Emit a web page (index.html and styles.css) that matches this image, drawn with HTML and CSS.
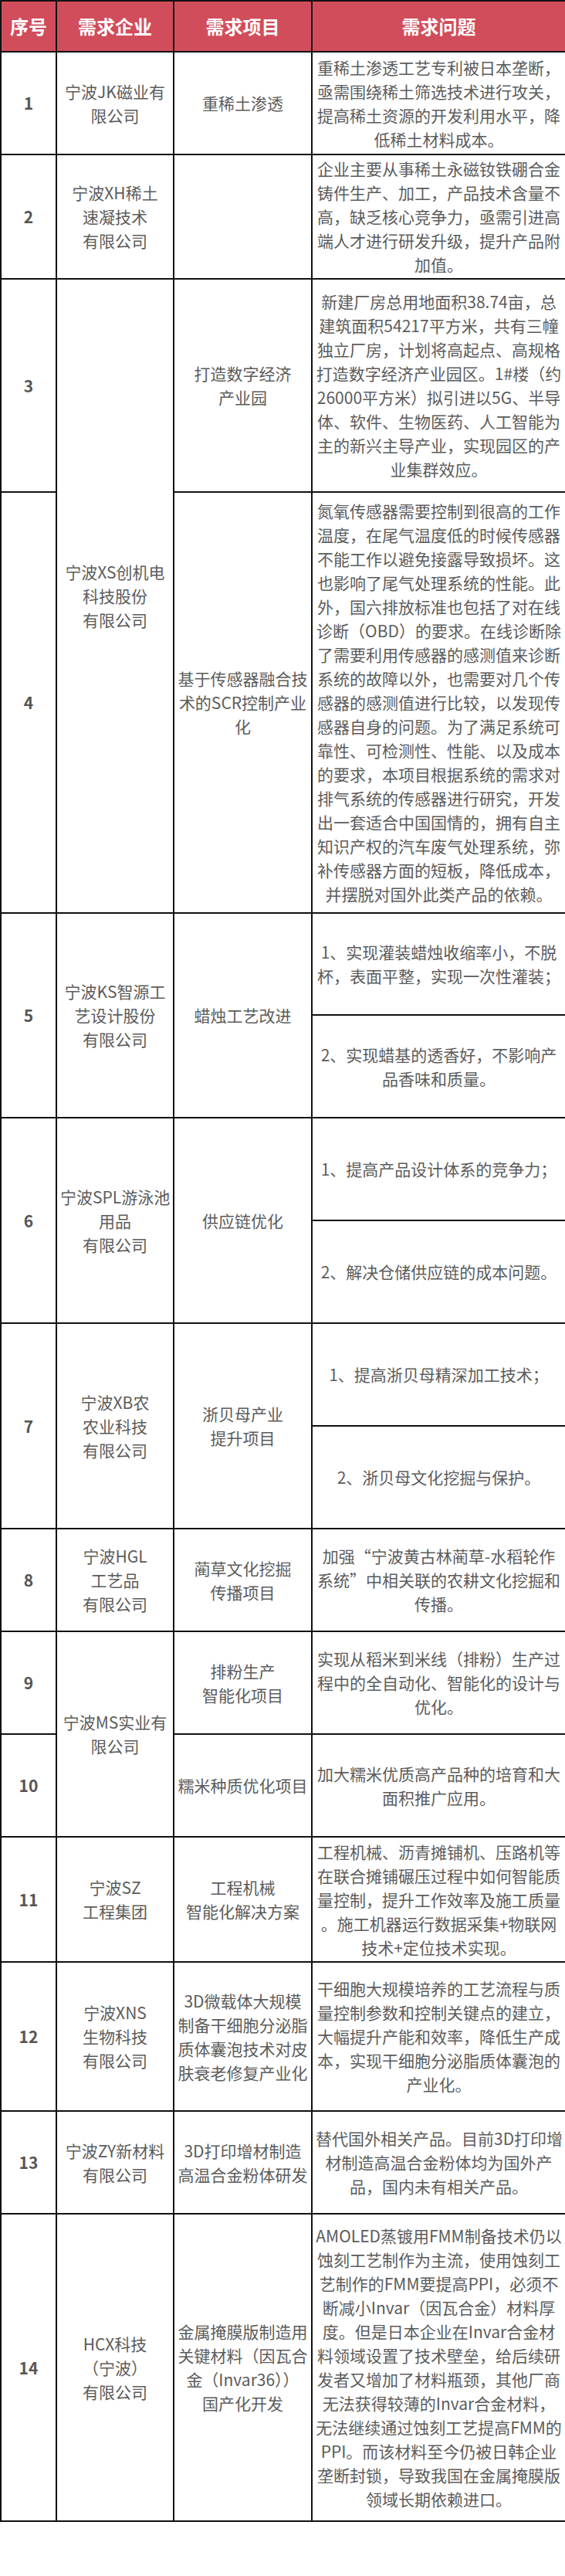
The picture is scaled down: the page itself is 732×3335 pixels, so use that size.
FILE: index.html
```html
<!DOCTYPE html>
<html lang="zh-CN">
<head>
<meta charset="utf-8">
<title>需求清单</title>
<link rel="stylesheet" href="styles.css">
</head>
<body>
<table class="demand">
  <colgroup>
    <col class="c-no">
    <col class="c-co">
    <col class="c-pj">
    <col class="c-qs">
  </colgroup>
  <thead>
    <tr class="h-66">
      <th>序号</th>
      <th>需求企业</th>
      <th>需求项目</th>
      <th>需求问题</th>
    </tr>
  </thead>
  <tbody>
    <tr class="h-133">
      <td class="no">1</td>
      <td>宁波JK磁业有<br>限公司</td>
      <td>重稀土渗透</td>
      <td>重稀土渗透工艺专利被日本垄断，<br>亟需围绕稀土筛选技术进行攻关，<br>提高稀土资源的开发利用水平，降<br>低稀土材料成本。</td>
    </tr>
    <tr class="h-161">
      <td class="no">2</td>
      <td>宁波XH稀土<br>速凝技术<br>有限公司</td>
      <td></td>
      <td>企业主要从事稀土永磁钕铁硼合金<br>铸件生产、加工，产品技术含量不<br>高，缺乏核心竞争力，亟需引进高<br>端人才进行研发升级，提升产品附<br>加值。</td>
    </tr>
    <tr class="h-276">
      <td class="no">3</td>
      <td rowspan="2">宁波XS创机电<br>科技股份<br>有限公司</td>
      <td>打造数字经济<br>产业园</td>
      <td>新建厂房总用地面积38.74亩，总<br>建筑面积54217平方米，共有三幢<br>独立厂房，计划将高起点、高规格<br>打造数字经济产业园区。1#楼（约<br>26000平方米）拟引进以5G、半导<br>体、软件、生物医药、人工智能为<br>主的新兴主导产业，实现园区的产<br>业集群效应。</td>
    </tr>
    <tr class="h-545">
      <td class="no">4</td>
      <td>基于传感器融合技<br>术的SCR控制产业<br>化</td>
      <td>氮氧传感器需要控制到很高的工作<br>温度，在尾气温度低的时候传感器<br>不能工作以避免接露导致损坏。这<br>也影响了尾气处理系统的性能。此<br>外，国六排放标准也包括了对在线<br>诊断（OBD）的要求。在线诊断除<br>了需要利用传感器的感测值来诊断<br>系统的故障以外，也需要对几个传<br>感器的感测值进行比较，以发现传<br>感器自身的问题。为了满足系统可<br>靠性、可检测性、性能、以及成本<br>的要求，本项目根据系统的需求对<br>排气系统的传感器进行研究，开发<br>出一套适合中国国情的，拥有自主<br>知识产权的汽车废气处理系统，弥<br>补传感器方面的短板，降低成本，<br>并摆脱对国外此类产品的依赖。</td>
    </tr>
    <tr class="h-132">
      <td class="no" rowspan="2">5</td>
      <td rowspan="2">宁波KS智源工<br>艺设计股份<br>有限公司</td>
      <td rowspan="2">蜡烛工艺改进</td>
      <td>1、实现灌装蜡烛收缩率小，不脱<br>杯，表面平整，实现一次性灌装；</td>
    </tr>
    <tr class="h-133">
      <td>2、实现蜡基的透香好，不影响产<br>品香味和质量。</td>
    </tr>
    <tr class="h-133">
      <td class="no" rowspan="2">6</td>
      <td rowspan="2">宁波SPL游泳池<br>用品<br>有限公司</td>
      <td rowspan="2">供应链优化</td>
      <td>1、提高产品设计体系的竞争力；</td>
    </tr>
    <tr class="h-133">
      <td>2、解决仓储供应链的成本问题。</td>
    </tr>
    <tr class="h-133">
      <td class="no" rowspan="2">7</td>
      <td rowspan="2">宁波XB农<br>农业科技<br>有限公司</td>
      <td rowspan="2">浙贝母产业<br>提升项目</td>
      <td>1、提高浙贝母精深加工技术；</td>
    </tr>
    <tr class="h-133">
      <td>2、浙贝母文化挖掘与保护。</td>
    </tr>
    <tr class="h-133">
      <td class="no">8</td>
      <td>宁波HGL<br>工艺品<br>有限公司</td>
      <td>蔺草文化挖掘<br>传播项目</td>
      <td>加强“宁波黄古林蔺草-水稻轮作<br>系统”中相关联的农耕文化挖掘和<br>传播。</td>
    </tr>
    <tr class="h-133">
      <td class="no">9</td>
      <td rowspan="2">宁波MS实业有<br>限公司</td>
      <td>排粉生产<br>智能化项目</td>
      <td>实现从稻米到米线（排粉）生产过<br>程中的全自动化、智能化的设计与<br>优化。</td>
    </tr>
    <tr class="h-133">
      <td class="no">10</td>
      <td>糯米种质优化项目</td>
      <td>加大糯米优质高产品种的培育和大<br>面积推广应用。</td>
    </tr>
    <tr class="h-162">
      <td class="no">11</td>
      <td>宁波SZ<br>工程集团</td>
      <td>工程机械<br>智能化解决方案</td>
      <td>工程机械、沥青摊铺机、压路机等<br>在联合摊铺碾压过程中如何智能质<br>量控制，提升工作效率及施工质量<br>。施工机器运行数据采集+物联网<br>技术+定位技术实现。</td>
    </tr>
    <tr class="h-193">
      <td class="no">12</td>
      <td>宁波XNS<br>生物科技<br>有限公司</td>
      <td>3D微载体大规模<br>制备干细胞分泌脂<br>质体囊泡技术对皮<br>肤衰老修复产业化</td>
      <td>干细胞大规模培养的工艺流程与质<br>量控制参数和控制关键点的建立，<br>大幅提升产能和效率，降低生产成<br>本，实现干细胞分泌脂质体囊泡的<br>产业化。</td>
    </tr>
    <tr class="h-133">
      <td class="no">13</td>
      <td>宁波ZY新材料<br>有限公司</td>
      <td>3D打印增材制造<br>高温合金粉体研发</td>
      <td>替代国外相关产品。目前3D打印增<br>材制造高温合金粉体均为国外产<br>品，国内未有相关产品。</td>
    </tr>
    <tr class="h-398">
      <td class="no">14</td>
      <td>HCX科技<br>（宁波）<br>有限公司</td>
      <td>金属掩膜版制造用<br>关键材料（因瓦合<br>金（Invar36））<br>国产化开发</td>
      <td>AMOLED蒸镀用FMM制备技术仍以<br>蚀刻工艺制作为主流，使用蚀刻工<br>艺制作的FMM要提高PPI，必须不<br>断减小Invar（因瓦合金）材料厚<br>度。但是日本企业在Invar合金材<br>料领域设置了技术壁垒，给后续研<br>发者又增加了材料瓶颈，其他厂商<br>无法获得较薄的Invar合金材料，<br>无法继续通过蚀刻工艺提高FMM的<br>PPI。而该材料至今仍被日韩企业<br>垄断封锁，导致我国在金属掩膜版<br>领域长期依赖进口。</td>
    </tr>
  </tbody>
</table>
</body>
</html>
```

FILE: styles.css
```css
html, body {
  margin: 0;
  padding: 0;
  background: #ffffff;
}

body {
  font-family: "Noto Sans CJK SC", "Noto Sans", sans-serif;
  color: #5c5c5c;
}

.demand {
  width: 732px;
  border-collapse: collapse;
  table-layout: fixed;
}

.c-no { width: 72px; }
.c-co { width: 152px; }
.c-pj { width: 179px; }
.c-qs { width: 329px; }

.demand th,
.demand td {
  border: 2px solid #111111;
  padding: 0 4px;
  text-align: center;
  vertical-align: middle;
  white-space: nowrap;
  overflow: visible;
}

.demand th {
  background: #d14d5b;
  color: #ffffff;
  font-size: 24px;
  font-weight: 700;
  line-height: 32px;
}

.demand td {
  font-size: 21px;
  line-height: 31px;
  font-weight: 400;
}

.demand td.no {
  font-weight: 700;
  color: #555555;
}

.h-66 { height: 66px; }
.h-132 { height: 132px; }
.h-133 { height: 133px; }
.h-161 { height: 161px; }
.h-162 { height: 162px; }
.h-193 { height: 193px; }
.h-276 { height: 276px; }
.h-398 { height: 398px; }
.h-545 { height: 545px; }
```
